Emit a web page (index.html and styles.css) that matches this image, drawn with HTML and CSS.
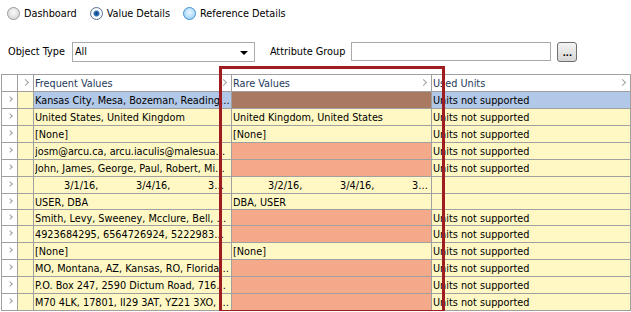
FILE: index.html
```html
<!DOCTYPE html>
<html>

<head>
    <meta name="viewport" content="width=device-width, initial-scale=1" />
    <title>Value Details</title>
    <link rel="stylesheet" href="styles.css">
</head>

<body>
    <div class="modes">
        <label class="mode"><span class="radio"></span>Dashboard</label>
        <label class="mode"><span class="radio on"></span>Value Details</label>
        <label class="mode"><span class="radio hot"></span>Reference Details</label>
    </div>

    <div class="filters">
        <span class="lbl">Object Type</span>
        <div class="combo">
            <span class="combo-text">All</span>
            <span class="combo-arrow"></span>
        </div>
        <span class="lbl lbl2">Attribute Group</span>
        <div class="field"></div>
        <button class="dots">...</button>
    </div>

    <div class="grid">
        <div class="row head">
            <div class="c ind"></div>
            <div class="c nar"><i class="chev"></i></div>
            <div class="c freq">Frequent Values<i class="chev"></i></div>
            <div class="c rare">Rare Values<i class="chev"></i></div>
            <div class="c used">Used Units<i class="chev"></i></div>
        </div>

        <div class="row sel">
            <div class="c ind"><i class="chev"></i></div>
            <div class="c nar"></div>
            <div class="c freq"><span class="t">Kansas City, Mesa, Bozeman, Reading, Springfield, Austin</span></div>
            <div class="c rare dark"></div>
            <div class="c used">Units not supported</div>
        </div>
        <div class="row">
            <div class="c ind"><i class="chev"></i></div>
            <div class="c nar"></div>
            <div class="c freq"><span class="t">United States, United Kingdom</span></div>
            <div class="c rare"><span class="t">United Kingdom, United States</span></div>
            <div class="c used">Units not supported</div>
        </div>
        <div class="row">
            <div class="c ind"><i class="chev"></i></div>
            <div class="c nar"></div>
            <div class="c freq"><span class="t">[None]</span></div>
            <div class="c rare"><span class="t">[None]</span></div>
            <div class="c used">Units not supported</div>
        </div>
        <div class="row">
            <div class="c ind"><i class="chev"></i></div>
            <div class="c nar"></div>
            <div class="c freq"><span class="t">josm@arcu.ca, arcu.iaculis@malesuada.edu, nisi@nunc.org</span></div>
            <div class="c rare hot"></div>
            <div class="c used">Units not supported</div>
        </div>
        <div class="row">
            <div class="c ind"><i class="chev"></i></div>
            <div class="c nar"></div>
            <div class="c freq"><span class="t">John, James, George, Paul, Robert, Michael, David</span></div>
            <div class="c rare hot"></div>
            <div class="c used">Units not supported</div>
        </div>
        <div class="row">
            <div class="c ind"><i class="chev"></i></div>
            <div class="c nar"></div>
            <div class="c freq dates f"><span>3/1/16,</span><span>3/4/16,</span><span class="last">3/5/16,</span></div>
            <div class="c rare dates r"><span>3/2/16,</span><span>3/4/16,</span><span class="last">3/6/16,</span></div>
            <div class="c used"></div>
        </div>
        <div class="row short">
            <div class="c ind"><i class="chev"></i></div>
            <div class="c nar"></div>
            <div class="c freq"><span class="t">USER, DBA</span></div>
            <div class="c rare"><span class="t">DBA, USER</span></div>
            <div class="c used"></div>
        </div>
        <div class="row short">
            <div class="c ind"><i class="chev"></i></div>
            <div class="c nar"></div>
            <div class="c freq"><span class="t">Smith, Levy, Sweeney, Mcclure, Bell, Parker, Hayes</span></div>
            <div class="c rare hot"></div>
            <div class="c used">Units not supported</div>
        </div>
        <div class="row">
            <div class="c ind"><i class="chev"></i></div>
            <div class="c nar"></div>
            <div class="c freq"><span class="t">4923684295, 6564726924, 5222983477, 1234567890</span></div>
            <div class="c rare hot"></div>
            <div class="c used">Units not supported</div>
        </div>
        <div class="row">
            <div class="c ind"><i class="chev"></i></div>
            <div class="c nar"></div>
            <div class="c freq"><span class="t">[None]</span></div>
            <div class="c rare"><span class="t">[None]</span></div>
            <div class="c used">Units not supported</div>
        </div>
        <div class="row">
            <div class="c ind"><i class="chev"></i></div>
            <div class="c nar"></div>
            <div class="c freq"><span class="t">MO, Montana, AZ, Kansas, RO, Florida, Texas</span></div>
            <div class="c rare hot"></div>
            <div class="c used">Units not supported</div>
        </div>
        <div class="row">
            <div class="c ind"><i class="chev"></i></div>
            <div class="c nar"></div>
            <div class="c freq"><span class="t">P.O. Box 247, 2590 Dictum Road, 7160 Nunc Street</span></div>
            <div class="c rare hot"></div>
            <div class="c used">Units not supported</div>
        </div>
        <div class="row">
            <div class="c ind"><i class="chev"></i></div>
            <div class="c nar"></div>
            <div class="c freq"><span class="t">M70 4LK, 17801, II29 3AT, YZ21 3XO, 55012</span></div>
            <div class="c rare hot"></div>
            <div class="c used">Units not supported</div>
        </div>

        <div class="mark"></div>
    </div>
</body>

</html>
```

FILE: styles.css
```css
body {
    margin: 0;
    font-family: "DejaVu Sans Condensed", "Liberation Sans", sans-serif;
    font-size: 10.8px;
    color: #000;
    background-color: #fff;
    overflow: hidden;
}

/* mode radios */
.modes {
    display: flex;
    align-items: center;
    height: 13px;
    padding: 7px 0 0 7px;
}

.mode {
    display: flex;
    align-items: center;
    margin-right: 13px;
    line-height: 13px;
}

.radio {
    width: 11px;
    height: 11px;
    border: 1px solid #9a9a9a;
    border-radius: 50%;
    margin-right: 4px;
    background: radial-gradient(circle at 50% 40%, #fafafa 0, #dcdcdc 70%, #cfcfcf 100%);
}

.radio.on {
    border-color: #5a7590;
    background: radial-gradient(circle, #0d3f7a 0, #2f77bd 2.5px, #ffffff 3.5px, #dfe6ee 100%);
}

.radio.hot {
    border-color: #3b8fd6;
    background: radial-gradient(circle at 50% 40%, #e8f6ff 0, #a9d8f7 70%, #7cc0ee 100%);
}

/* filter row */
.filters {
    display: flex;
    align-items: center;
    height: 21px;
    margin-top: 21px;
    padding-left: 8px;
}

.lbl {
    margin-right: 7px;
}

.lbl2 {
    margin-left: 15px;
    margin-right: 6px;
}

.combo {
    box-sizing: border-box;
    width: 183px;
    height: 20px;
    border: 1px solid #a9a9a9;
    display: flex;
    align-items: center;
    padding-left: 2px;
}

.combo-text {
    flex: 1;
}

.combo-arrow {
    width: 0;
    height: 0;
    border-left: 4px solid transparent;
    border-right: 4px solid transparent;
    border-top: 4px solid #000;
    margin-right: 6px;
    margin-top: 2px;
}

.field {
    box-sizing: border-box;
    width: 200px;
    height: 19px;
    border: 1px solid #a9a9a9;
}

.dots {
    box-sizing: border-box;
    width: 20px;
    height: 20px;
    margin-left: 6px;
    padding: 0 0 2px 0;
    border: 1px solid #707070;
    border-radius: 3px;
    background: linear-gradient(#f4f4f4, #e4e4e4 50%, #d6d6d6);
    font-family: "Liberation Sans", Arial, sans-serif;
    font-size: 11px;
    font-weight: bold;
    line-height: 14px;
    display: flex;
    align-items: flex-end;
    justify-content: center;
}

/* grid */
.grid {
    position: relative;
    margin: 12px 0 0 1px;
    width: 630px;
    border-top: 1px solid #a0a0a0;
    border-left: 1px solid #a0a0a0;
}

.row {
    display: flex;
    height: 17px;
    background-color: #fff8c4;
}

.row.short {
    height: 16px;
}

.c {
    box-sizing: border-box;
    height: 100%;
    border-right: 1px solid #a0a0a0;
    border-bottom: 1px solid #a0a0a0;
    line-height: 17px;
    padding-left: 1px;
    white-space: nowrap;
    overflow: hidden;
    position: relative;
}

.ind {
    width: 16px;
    background-color: #fff;
}

.nar {
    width: 16px;
}

.freq {
    width: 198px;
}

.rare {
    width: 200px;
}

.used {
    width: 199px;
}

.t {
    display: block;
    overflow: hidden;
    text-overflow: ellipsis;
    padding-right: 1px;
}

.head {
    background-color: #fff;
}

.head .c {
    color: #1f3a5c;
}

.sel .freq,
.sel .used {
    background-color: #b2c8e8;
}

.rare.hot {
    background-color: #f5a98b;
}

.rare.dark {
    background-color: #aa7961;
}

.dates {
    display: flex;
}

.dates span {
    flex: none;
    width: 72px;
}

.dates span.last {
    width: 16px;
    overflow: hidden;
    text-overflow: ellipsis;
}

.dates.f {
    padding-left: 30px;
}

.dates.r {
    padding-left: 36px;
}

/* chevrons */
.chev {
    position: absolute;
    top: 5px;
    right: 5px;
    width: 4px;
    height: 4px;
    border-top: 1.5px solid #a0a0a0;
    border-right: 1.5px solid #a0a0a0;
    transform: rotate(45deg);
}

.ind .chev {
    right: auto;
    left: 6px;
    top: 5px;
    width: 3px;
    height: 3px;
}

/* annotation box */
.mark {
    position: absolute;
    left: 217px;
    top: -9px;
    width: 220px;
    height: 241px;
    border: 3px solid #9f1c21;
}
```
